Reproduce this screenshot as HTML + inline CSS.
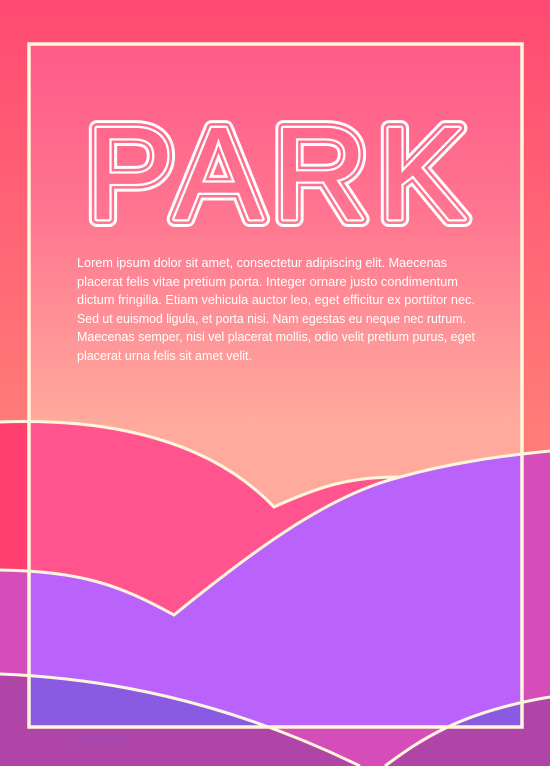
<!DOCTYPE html>
<html><head><meta charset="utf-8"><style>
html,body{margin:0;padding:0;width:550px;height:766px;overflow:hidden}
svg{display:block}
text{font-family:"Liberation Sans",sans-serif}
</style></head><body>
<svg width="550" height="766" viewBox="0 0 550 766" xmlns="http://www.w3.org/2000/svg">
<defs>
<linearGradient id="og" x1="0" y1="0" x2="0" y2="430" gradientUnits="userSpaceOnUse">
<stop offset="0" stop-color="#ff4a72"/><stop offset="1" stop-color="#ff7c78"/></linearGradient>
<linearGradient id="ig" x1="0" y1="43" x2="0" y2="420" gradientUnits="userSpaceOnUse">
<stop offset="0" stop-color="#ff5a88"/><stop offset="0.45" stop-color="#ff7590"/><stop offset="1" stop-color="#ffaa9c"/></linearGradient>
<clipPath id="fr"><rect x="29" y="44" width="493" height="683"/></clipPath>
<path id="pink" d="M0,422 C110,418 210,440 274,507 C320,486 350,477 398,477 C450,465 500,458 550,452 L550,766 L0,766Z"/>
<path id="purp" d="M0,570 C80,571 120,585 174,615 C260,545 330,495 400,477 C450,463 500,456 550,451 L550,766 L0,766Z"/>
<path id="b1" d="M0,674 C100,678 220,698 360,766 L0,766Z"/>
<path id="b2" d="M385,766 C420,740 460,712 550,697 L550,766Z"/>
</defs>
<rect width="550" height="766" fill="url(#og)"/>
<use href="#pink" fill="#ff4070"/>
<use href="#purp" fill="#d44db8"/>
<use href="#b1" fill="#b045a8"/>
<use href="#b2" fill="#b045a8"/>
<rect x="0" y="727" width="550" height="39" fill="#b045a8"/>
<path d="M270,727 C300,740 330,752 360,766 L385,766 C405,752 430,738 452,727Z" fill="#d44db8"/>
<g clip-path="url(#fr)">
<rect width="550" height="766" fill="url(#ig)"/>
<use href="#pink" fill="#ff548e"/>
<use href="#purp" fill="#b963fc"/>
<use href="#b1" fill="#8a5ae2"/>
<use href="#b2" fill="#8a5ae2"/>
</g>
<g fill="none" stroke="#fff6dc" stroke-width="3">
<path d="M0,422 C110,418 210,440 274,507 C320,486 350,477 398,477"/>
<path d="M0,570 C80,571 120,585 174,615 C260,545 330,495 400,477 C450,463 500,456 550,451"/>
<path d="M0,674 C100,678 220,698 360,766"/>
<path d="M385,766 C420,740 460,712 550,697"/>
<rect x="29" y="44" width="493" height="683" stroke-width="3.5"/>
</g>
<g font-size="132" stroke-linejoin="round">
<text x="86" y="219" textLength="380" lengthAdjust="spacing" fill="#fff" stroke="#fff" stroke-width="16">PARK</text>
<text x="86" y="219" textLength="380" lengthAdjust="spacing" fill="url(#ig)" stroke="url(#ig)" stroke-width="10">PARK</text>
<text x="86" y="219" textLength="380" lengthAdjust="spacing" fill="#fff" stroke="#fff" stroke-width="5">PARK</text>
<text x="86" y="219" textLength="380" lengthAdjust="spacing" fill="url(#ig)" stroke="url(#ig)" stroke-width="0.5">PARK</text>
</g>
<g fill="#fff" font-size="12.5">
<text x="77" y="267" textLength="370" lengthAdjust="spacingAndGlyphs">Lorem ipsum dolor sit amet, consectetur adipiscing elit. Maecenas</text>
<text x="77" y="286" textLength="381" lengthAdjust="spacingAndGlyphs">placerat felis vitae pretium porta. Integer ornare  justo condimentum</text>
<text x="77" y="304" textLength="398" lengthAdjust="spacingAndGlyphs">dictum fringilla. Etiam vehicula auctor leo, eget efficitur ex porttitor nec.</text>
<text x="77" y="323" textLength="389" lengthAdjust="spacingAndGlyphs">Sed ut euismod ligula, et porta nisi. Nam egestas eu neque nec rutrum.</text>
<text x="77" y="341" textLength="398" lengthAdjust="spacingAndGlyphs">Maecenas semper, nisi vel placerat mollis, odio velit pretium purus, eget</text>
<text x="77" y="360" textLength="175" lengthAdjust="spacingAndGlyphs">placerat urna felis sit amet velit.</text>
</g>
<text x="74" y="743" font-size="13" fill="#9a4ab8">Sneha M.</text>
</svg>
</body></html>
